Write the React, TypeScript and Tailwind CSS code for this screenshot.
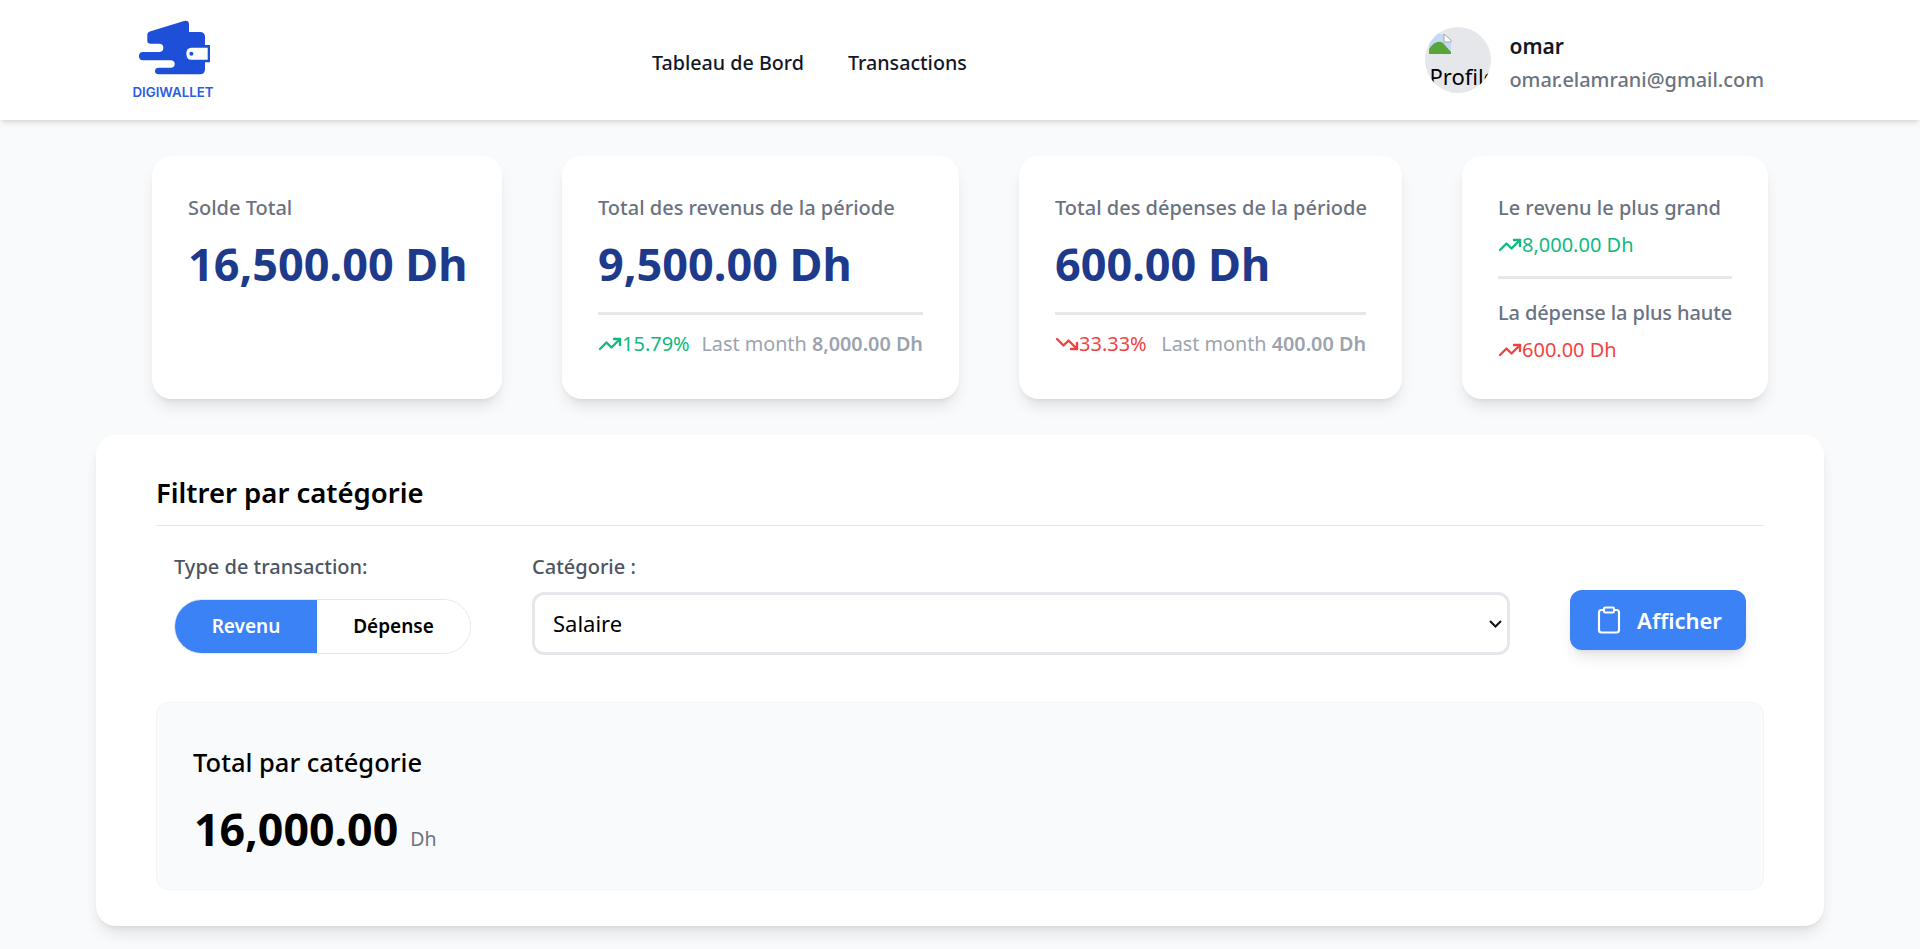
import React from "react";
import { Clipboard, TrendingUp, TrendingDown } from "lucide-react";

function Logo() {
  return (
    <div className="flex flex-col items-center w-[84px] pb-[3px]">
      <svg width="75" height="58" viewBox="112 56 225 174" className="block ml-[4px]">
        <path
          fill="#1d4fd8"
          d="M150 93 L250 62 Q265 58 265 73 L265 95 L298 95 Q313 95 313 110 L313 207 Q313 222 298 222 L175 222 Q163 222 163 212 Q163 202 175 202 L210 202 Q222 202 222 191 Q222 180 210 180 L127 180 Q115 180 115 167 Q115 155 127 155 L175 155 Q188 155 188 142 Q188 130 175 130 L150 130 Q140 130 140 122 L140 103 Q140 96 150 93 Z"
        />
        <path fill="#1d4fd8" d="M272 134 L328 134 L328 186 L272 186 Q252 186 252 160 Q252 134 272 134 Z" />
        <path fill="#ffffff" d="M272 142 L321 142 L321 178 L272 178 Q257 178 257 160 Q257 142 272 142 Z" />
        <circle cx="272" cy="160" r="6" fill="#1d4fd8" />
      </svg>
      <span className="text-[13.3px] leading-[14px] font-semibold text-[#2d5be3] font-['Inter',sans-serif] mt-[8px]">DIGIWALLET</span>
    </div>
  );
}

function Delta({ up, color, label }: { up: boolean; color: string; label: string }) {
  const Icon = up ? TrendingUp : TrendingDown;
  return (
    <span className={`flex items-center ${color}`}>
      <Icon size={24} strokeWidth={2.4} />
      <span>{label}</span>
    </span>
  );
}

function StatCard({ width, title, value, delta, last }: { width: string; title: string; value: string; delta?: React.ReactNode; last?: string }) {
  return (
    <div className={`bg-white rounded-[20px] shadow-lg px-9 pt-9 h-[243px] shrink-0 ${width}`}>
      <p className="text-[20px] leading-[28px] font-medium text-[#6b7280] mt-[2px] whitespace-nowrap">{title}</p>
      <p className="text-[45px] leading-[60px] font-bold text-[#1e3a8a] mt-[12px] whitespace-nowrap">{value}</p>
      {delta && (
        <div className="mt-[18px] border-t-[3px] border-[#e5e7eb] pt-[15px] flex items-center justify-between text-[20px] leading-[28px] text-[#9ca3af] whitespace-nowrap">
          {delta}
          <span className="text-[19.8px]">
            Last month <span className="font-semibold">{last}</span>
          </span>
        </div>
      )}
    </div>
  );
}

export default function App() {
  return (
    <div className="min-h-[949px] bg-[#f9fafb] font-['Noto_Sans','Open_Sans',sans-serif]">
      <header className="h-[120px] bg-white shadow-md flex items-center pl-[131px] pr-[156px]">
        <Logo />
        <nav className="flex gap-[44px] text-[19.7px] leading-[28px] font-medium text-[#111827] ml-[437px] pt-[5px]">
          <span>Tableau de Bord</span>
          <span>Transactions</span>
        </nav>
        <div className="flex items-center gap-[18px] ml-auto">
          <div className="relative w-[66px] h-[66px] rounded-full bg-[#e5e7eb] overflow-hidden text-black text-[22px]">
            <svg width="24" height="22" viewBox="0 0 24 22" className="absolute left-[3px] top-[6px]">
              <path fill="#c3d9f5" d="M1 1 L16 1 L16 7 L23 7 L23 21 L1 21 Z" />
              <path fill="#5aa53a" d="M1 21 L1 16 Q8 6 15 10 L23 19 L23 21 Z" />
              <path fill="#ffffff" stroke="#a8a8a8" strokeWidth="1" d="M16 1 L23 7 L23 9 L16 9 Z" />
            </svg>
            <span className="absolute left-[4px] top-[34px] leading-[30px] whitespace-nowrap">Profile</span>
          </div>
          <div className="pt-[6px]">
            <p className="text-[21px] leading-[28px] font-semibold text-[#111827]">omar</p>
            <p className="text-[19.9px] leading-[28px] font-medium text-[#6b7280] mt-[6px]">omar.elamrani@gmail.com</p>
          </div>
        </div>
      </header>

      <main className="pt-9 pb-6">
        <section className="flex justify-center gap-[60px]">
          <StatCard width="w-[350px]" title="Solde Total" value="16,500.00 Dh" />
          <StatCard
            width="w-[397px]"
            title="Total des revenus de la période"
            value="9,500.00 Dh"
            delta={<Delta up color="text-[#10b981]" label="15.79%" />}
            last="8,000.00 Dh"
          />
          <StatCard
            width="w-[383px]"
            title="Total des dépenses de la période"
            value="600.00 Dh"
            delta={<Delta up={false} color="text-[#ef4444]" label="33.33%" />}
            last="400.00 Dh"
          />
          <div className="bg-white rounded-[20px] shadow-lg px-9 pt-9 h-[243px] w-[306px] shrink-0 text-[20px] leading-[28px] whitespace-nowrap">
            <p className="font-medium text-[#6b7280] mt-[2px]">Le revenu le plus grand</p>
            <div className="mt-[9px]"><Delta up color="text-[#10b981]" label="8,000.00 Dh" /></div>
            <div className="border-t-[3px] border-[#e5e7eb] mt-[17px] mb-[20px]" />
            <p className="font-medium text-[#6b7280] tracking-[-0.12px]">La dépense la plus haute</p>
            <div className="mt-[9px]"><Delta up color="text-[#ef4444]" label="600.00 Dh" /></div>
          </div>
        </section>

        <section className="mt-9 mx-[96px] bg-white rounded-[20px] shadow-lg px-[60px] pt-[40px] h-[491px]">
          <h2 className="text-[27.5px] leading-[36px] font-semibold text-black pb-[14px] border-b border-[#e5e7eb]">Filtrer par catégorie</h2>
          <div className="flex items-start mt-[27px] px-[18px] h-[102px]">
            <div className="w-[297px] shrink-0 mr-[61px]">
              <p className="text-[20px] leading-[28px] font-medium text-[#4b5563] mb-[18px]">Type de transaction:</p>
              <div className="flex h-[55px] rounded-full border border-[#e5e7eb] overflow-hidden text-[19px] font-semibold">
                <div className="w-[142px] bg-[#3b82f6] text-white flex items-center justify-center">Revenu</div>
                <div className="flex-1 bg-white text-black flex items-center justify-center">Dépense</div>
              </div>
            </div>
            <div className="flex-1 min-w-0">
              <p className="text-[20px] leading-[28px] font-medium text-[#4b5563] mb-[11px]">Catégorie :</p>
              <div className="relative">
                <select defaultValue="Salaire" className="block appearance-none w-full h-[63px] rounded-xl border-[3px] border-[#e5e7eb] bg-white px-[18px] text-[22px] text-black">
                  <option>Salaire</option>
                </select>
                <svg width="13" height="8" viewBox="0 0 13 8" className="absolute right-[8px] top-[28px] pointer-events-none">
                  <path d="M1 1 L6.5 6.5 L12 1" fill="none" stroke="#111111" strokeWidth="2" />
                </svg>
              </div>
            </div>
            <button className="ml-[60px] mt-[37px] w-[176px] h-[60px] rounded-xl bg-[#3b82f6] text-white shadow-lg flex items-center justify-center gap-[13px] text-[22px] font-semibold">
              <Clipboard size={30} strokeWidth={1.7} />
              Afficher
            </button>
          </div>
          <div className="mt-[47px] bg-[#f9fafb] border border-[#f3f4f6] rounded-xl h-[188px] pl-9 pt-[41px]">
            <p className="text-[25.5px] leading-[36px] font-medium text-black">Total par catégorie</p>
            <p className="mt-[19px] flex items-baseline gap-3">
              <span className="text-[44.7px] leading-[60px] font-bold text-black ml-px">16,000.00</span>
              <span className="text-[19.5px] text-[#6b7280]">Dh</span>
            </p>
          </div>
        </section>
      </main>
    </div>
  );
}
